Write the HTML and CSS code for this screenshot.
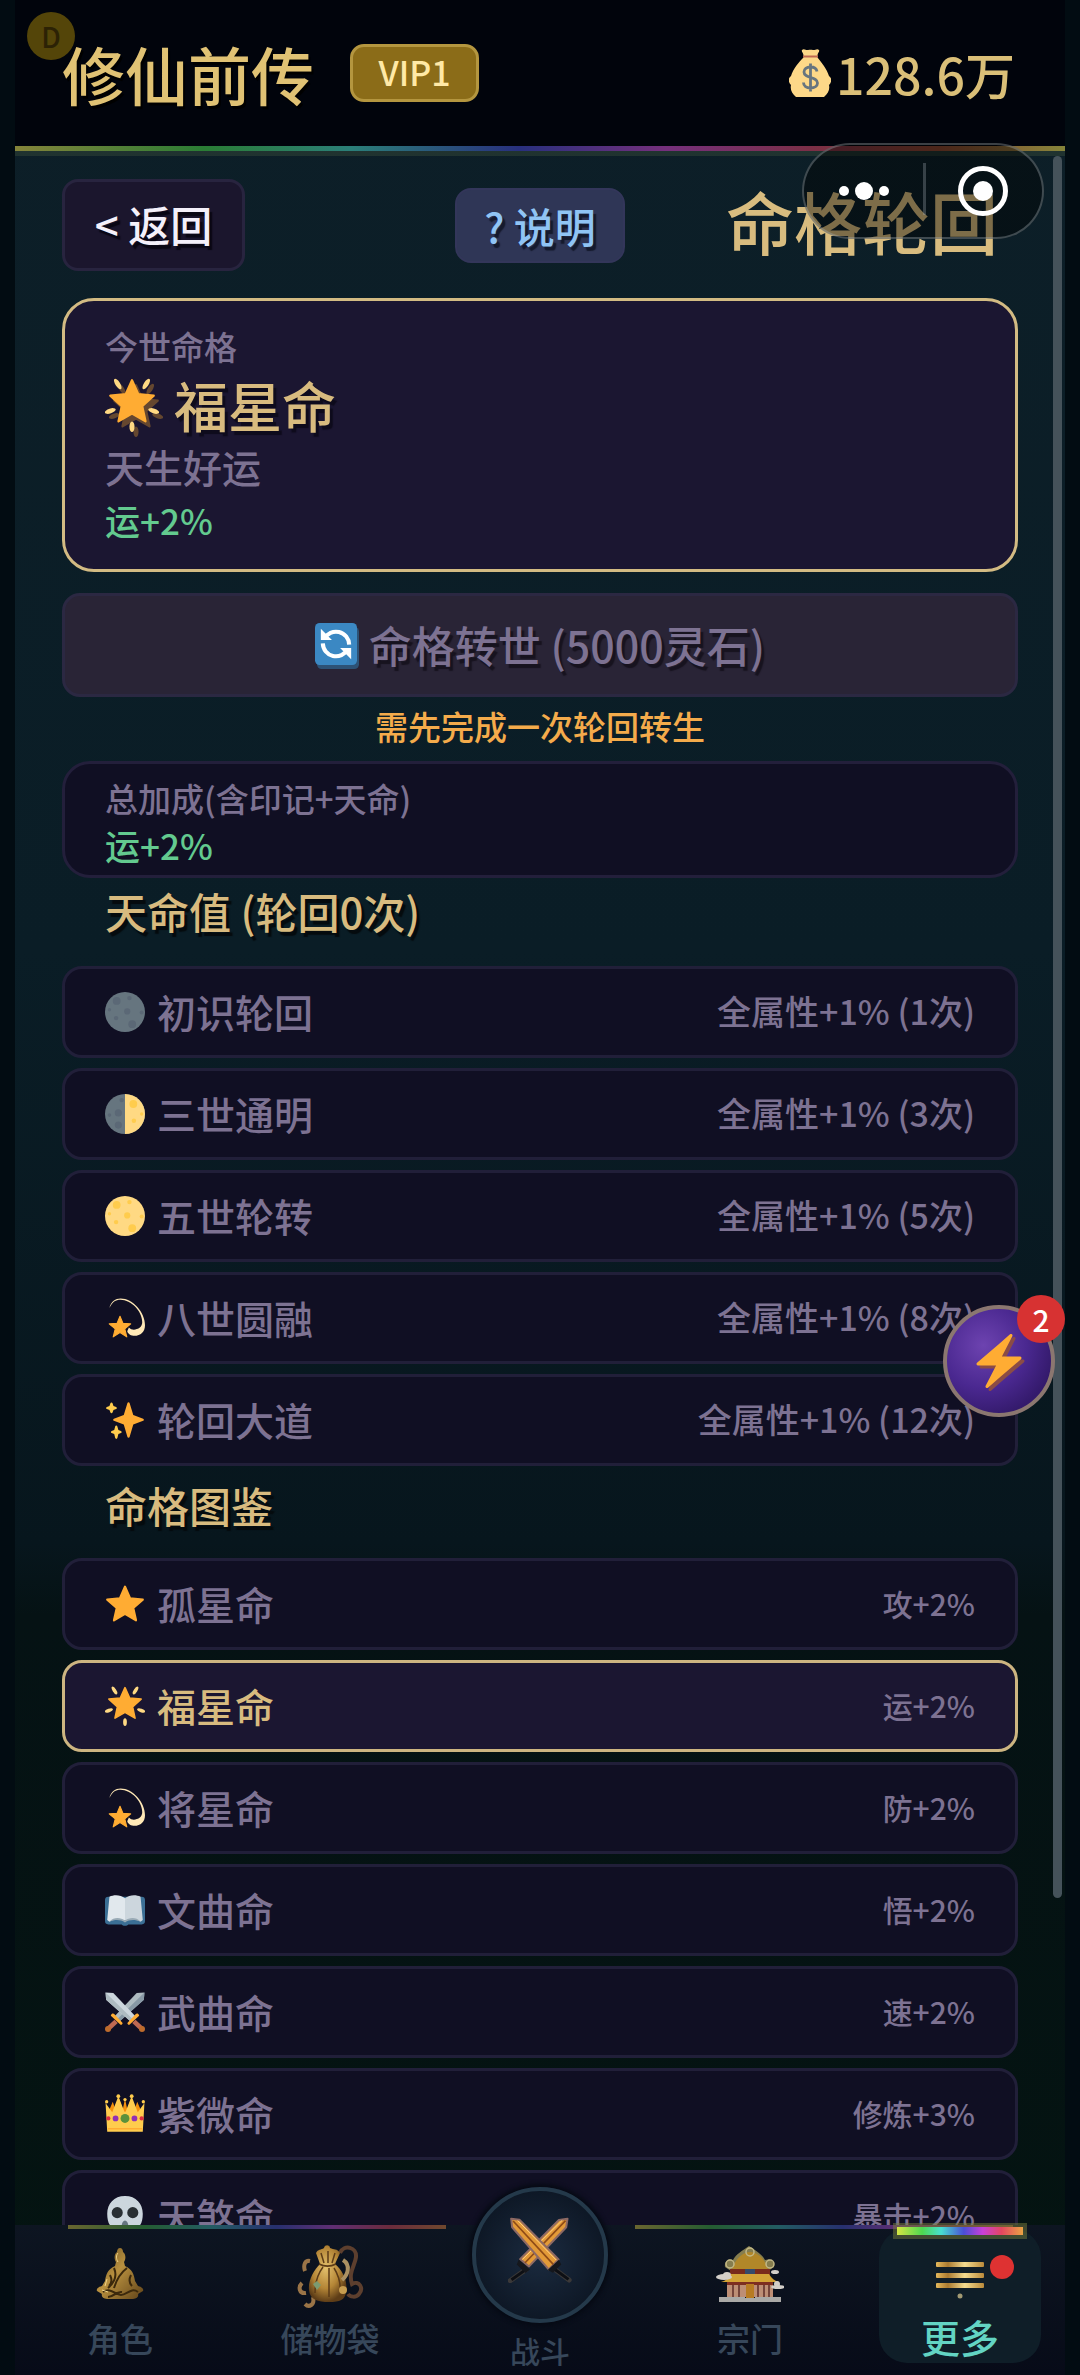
FILE: index.html
```html
<!DOCTYPE html>
<html lang="zh-CN">
<head>
  <meta charset="UTF-8" />
  <meta name="viewport" content="width=device-width, initial-scale=1.0"/>
  <title>修仙前传</title>
  <link rel="stylesheet" href="styles.css">
</head>
<body>

<!-- 图标 -->
<svg class="sprite" aria-hidden="true">
  <defs>
    <linearGradient id="gold" x1="0" y1="0" x2="1" y2="1">
      <stop offset="0" stop-color="#6b5222"/><stop offset=".45" stop-color="#b8903f"/><stop offset="1" stop-color="#5f4218"/>
    </linearGradient>
    <linearGradient id="bar" x1="0" y1="0" x2="1" y2="0">
      <stop offset="0" stop-color="#e5b95c"/><stop offset=".25" stop-color="#a97a30"/><stop offset=".6" stop-color="#f3dc90"/><stop offset="1" stop-color="#b98a3a"/>
    </linearGradient>
    <radialGradient id="sack" cx=".45" cy=".4" r=".6">
      <stop offset="0" stop-color="#e3c06c"/><stop offset=".6" stop-color="#b48536"/><stop offset="1" stop-color="#5e3d17"/>
    </radialGradient>
    <clipPath id="half"><path d="M18 0h18v36H18z"/></clipPath>
  </defs>
  <symbol id="star" viewBox="0 0 36 36">
    <path d="M18 2.500l4.600 10.400 11.400 1.100-8.600 7.500 2.500 11.200L18 26.900l-9.900 5.800 2.500-11.200L2 14l11.400-1.100z" fill="#ffac33" stroke="#ffac33" stroke-width="2" stroke-linejoin="round"/>
  </symbol>
  <symbol id="glow" viewBox="0 0 36 36">
    <g fill="#ffd983">
      <ellipse cx="8.500" cy="4" rx="1.600" ry="4" transform="rotate(-32 8.500 4)"/>
      <ellipse cx="27.500" cy="4" rx="1.600" ry="4" transform="rotate(32 27.500 4)"/>
      <ellipse cx="3.500" cy="22" rx="1.600" ry="3.800" transform="rotate(72 3.500 22)"/>
      <ellipse cx="32.500" cy="22" rx="1.600" ry="3.800" transform="rotate(-72 32.500 22)"/>
      <ellipse cx="18" cy="32.500" rx="1.700" ry="3.500"/>
    </g>
    <path d="M18 1.500l4.200 9.300 10.300 1-7.700 6.900 2.200 10.200L18 23.700l-9 5.200 2.200-10.200-7.700-6.900 10.300-1z" fill="#ffac33" stroke="#ffac33" stroke-width="1.500" stroke-linejoin="round"/>
  </symbol>
  <symbol id="dizzy" viewBox="0 0 36 36">
    <path d="M4 9C5.500 3 9.500.500 14 .500 25 .500 36 13 36 24.500c0 6-4 9.500-9.500 9.500-3 0-5.500-1-6.500-4l1.500-3.500c2 2 4.500 2.500 7 1.500 3-1 5-3 5-6.500C33.500 12 23.500 1.600 14 1.600 9.500 1.600 6.500 3.600 4 9z" fill="#ffe8b6"/>
    <path d="M13.500 16.500l2.600 6.300 7 .500-5.300 4.500 1.800 7.200-6.100-3.900-6.100 3.900 1.800-7.200-5.400-4.500 7.100-.500z" fill="#ffac33" stroke="#ffac33" stroke-linejoin="round"/>
  </symbol>
  <symbol id="sparkles" viewBox="0 0 36 36">
    <path fill="#ffac33" d="M34.347 16.893l-8.899-3.294-3.323-10.891c-.128-.42-.517-.708-.956-.708-.439 0-.828.288-.956.708l-3.322 10.891-8.900 3.294c-.393.146-.653.519-.653.938 0 .418.260.793.653.938l8.895 3.293 3.324 11.223c.126.424.516.715.959.715.442 0 .833-.291.959-.716l3.324-11.223 8.896-3.293c.391-.144.652-.518.652-.937 0-.418-.261-.792-.653-.938z"/>
    <path fill="#ffcc4d" d="M14.347 27.894l-2.314-.856-.9-3.300c-.118-.436-.513-.738-.964-.738-.451 0-.846.302-.965.737l-.9 3.300-2.313.856c-.393.146-.653.520-.653.938 0 .418.260.792.653.938l2.301.853.907 3.622c.112.444.511.756.970.756.459 0 .858-.312.970-.757l.907-3.622 2.301-.853c.393-.144.653-.519.653-.937 0-.418-.260-.793-.653-.937zM10.009 6.231l-2.364-.875-.876-2.365c-.145-.393-.519-.653-.938-.653-.418 0-.792.260-.938.653l-.875 2.365-2.365.875c-.393.146-.653.520-.653.938 0 .418.260.793.653.938l2.365.875.875 2.365c.146.393.520.653.938.653.418 0 .792-.260.938-.653l.875-2.365 2.365-.875c.393-.146.653-.520.653-.938 0-.418-.260-.792-.653-.938z"/>
  </symbol>
  <symbol id="craters" viewBox="0 0 36 36">
    <circle cx="10.500" cy="8" r="3.500"/><circle cx="20" cy="17.500" r="2.800"/><circle cx="24.500" cy="29" r="3.500"/><circle cx="22" cy="5.500" r="2"/><circle cx="10" cy="23.500" r="2"/><circle cx="33" cy="18.500" r="1.800"/><circle cx="4" cy="16" r="1.500"/>
  </symbol>
  <symbol id="newmoon" viewBox="0 0 36 36">
    <circle cx="18" cy="18" r="18" fill="#66757f"/><use href="#craters" fill="#5b6876"/>
  </symbol>
  <symbol id="fullmoon" viewBox="0 0 36 36">
    <circle cx="18" cy="18" r="18" fill="#ffd983"/><use href="#craters" fill="#ffcc4d"/>
  </symbol>
  <symbol id="halfmoon" viewBox="0 0 36 36">
    <circle cx="18" cy="18" r="18" fill="#66757f"/>
    <g fill="#5b6876"><circle cx="15" cy="5.500" r="2"/><circle cx="12" cy="17" r="3.200"/><circle cx="12" cy="28" r="3.200"/><circle cx="4" cy="19" r="1.600"/></g>
    <circle cx="18" cy="18" r="18" fill="#ffd983" clip-path="url(#half)"/>
    <g fill="#ffcc4d"><circle cx="25.500" cy="9" r="3.500"/><circle cx="26" cy="24" r="2"/><circle cx="33" cy="18" r="1.500"/></g>
  </symbol>
  <symbol id="book" viewBox="0 0 36 36">
    <path d="M3 6h30a3 3 0 0 1 3 3v19a3 3 0 0 1-3 3H21c-1 1.500-5 1.500-6 0H3a3 3 0 0 1-3-3V9a3 3 0 0 1 3-3z" fill="#3b6f95"/>
    <path d="M2 27L4 6c4-2 10-2 14 1.500v20c-5-2-10-2-14 1z" fill="#e1e8ed"/>
    <path d="M34 27L32 6c-4-2-10-2-14 1.500v20c5-2 10-2 14 1z" fill="#ccd6dd"/>
    <path d="M4 28.500c4-4.500 10-4 14-1 4-3 10-3.500 14 1-5-2-10-2-14 .800-4-2.800-9-2.800-14-.8z" fill="#99aab5"/>
  </symbol>
  <symbol id="swords" viewBox="0 0 36 36">
    <path d="M35.500.500l-7 .500L8 22.500l4.500 4.500L35 7z" fill="#aebbc1"/>
    <path d="M35.500.500L10.500 25l2 2L35 7z" fill="#8899a6"/>
    <path d="M6 20c0-1 2-1 2.500 0l7 7.500c1 1-.5 2.500-1.500 2l-8-7.500c-1-.500-1-1.500 0-2z" fill="#ffac33"/>
    <path d="M8.500 25l3 3-7 6.500-3-3z" fill="#bf6952"/><circle cx="2.700" cy="33.300" r="2.700" fill="#bd6b2c"/>
    <path d="M.500.500l7 .500L28 22.500 23.500 27 1 7z" fill="#ccd6dd"/>
    <path d="M.500.500L25.500 25l-2 2L1 7z" fill="#aebbc1"/>
    <path d="M30 20c0-1-2-1-2.500 0l-7 7.500c-1 1 .5 2.500 1.500 2l8-7.500c1-.500 1-1.500 0-2z" fill="#ffac33"/>
    <path d="M27.500 25l-3 3 7 6.500 3-3z" fill="#bf6952"/><circle cx="33.300" cy="33.300" r="2.700" fill="#bd6b2c"/>
  </symbol>
  <symbol id="crown" viewBox="0 0 36 36">
    <path d="M4 14l3-7 3 9 2-14 4 12 2-10 2 10 4-12 2 14 3-9 3 7-1 19H5z" fill="#f4900c"/>
    <path d="M2 34L.500 8l6 8.500L12 2l5.500 14h1L24 2l5.500 14.500 6-8.500L34 34z" fill="#ffcc4d"/>
    <g fill="#ffcc4d"><circle cx="1.500" cy="7" r="1.500"/><circle cx="12" cy="2" r="1.700"/><circle cx="24" cy="2" r="1.700"/><circle cx="34.500" cy="7" r="1.500"/><circle cx="18" cy="5" r="1.500"/></g>
    <path d="M2.500 30.500h31v1.500h-31z" fill="#ffac33"/>
    <circle cx="18" cy="22" r="4" fill="#5c913b"/><circle cx="9.500" cy="22" r="2.600" fill="#9232b4"/><circle cx="26.500" cy="22" r="2.600" fill="#9232b4"/><circle cx="3" cy="22" r="1.900" fill="#dd2e44"/><circle cx="33" cy="22" r="1.900" fill="#dd2e44"/>
  </symbol>
  <symbol id="skull" viewBox="0 0 36 36">
    <path d="M18 0C8 0 2 7 2 16c0 7 2 12 6 12v5a3 3 0 0 0 3 3h14a3 3 0 0 0 3-3v-5c4 0 6-5 6-12C34 7 28 0 18 0z" fill="#ccd6dd"/>
    <circle cx="11" cy="15" r="5" fill="#292f33"/><circle cx="25" cy="15" r="5" fill="#292f33"/><path d="M18 22c-2 0-3 3-3 5h6c0-2-1-5-3-5z" fill="#66757f"/>
  </symbol>
  <symbol id="refresh" viewBox="0 0 36 36">
    <rect width="36" height="36" rx="4" fill="#3b88c3"/>
    <path d="M8 13.500A11.300 11.300 0 0 1 29.300 18.500M28 22.500A11.300 11.300 0 0 1 6.700 17.500" fill="none" stroke="#fff" stroke-width="3.500"/>
    <path d="M5 5v9.500h9.500zM31 31v-9.500h-9.500z" fill="#fff"/>
  </symbol>
  <symbol id="bolt" viewBox="0 0 36 36">
    <path fill="#ffac33" d="M32.938 15.651C32.792 15.260 32.418 15 32 15H19.925L26.890 1.458c.219-.426.106-.947-.271-1.243C26.437.071 26.218 0 26 0c-.233 0-.466.082-.653.243L18 6.588 3.347 19.243c-.316.273-.430.714-.284 1.105S3.582 21 4 21h12.075L9.110 34.542c-.219.426-.106.947.271 1.243.182.144.401.215.619.215.233 0 .466-.082.653-.243L18 29.412l14.653-12.655c.317-.273.430-.714.285-1.106z"/>
  </symbol>
  <symbol id="moneybag" viewBox="0 0 42 48">
    <path d="M13 1c2-2 4 .500 6 0s3-.500 5 0 4-2 6 0c1 1.500-1.500 3-1.500 5.500v2C32 13 38 20 40 27c3 2 3 6 0 9 1 5-1 8-5 12H7c-4-4-6-7-5-12-3-3-3-7 0-9 2-7 8-14 12.500-18.500v-2C14.500 4 12 2.500 13 1z" fill="#fdd888"/>
    <path d="M14 6.500h15v2H14z" fill="#bf6952"/>
    <path d="M28 22.500c-.5-3-3-4.500-6.500-4.500-4 0-6.500 2-6.500 5 0 7 13.500 4 13.500 11 0 3-3 5-7 5s-7-2-7-5.500M21.500 14.500v28" fill="none" stroke="#67757f" stroke-width="2.800"/>
  </symbol>
</svg>

<div class="app">
  <header class="header">
    <span class="debug">D</span>
    <h1 class="game-name">修仙前传</h1>
    <span class="vip">VIP1</span>
    <span class="money"><svg class="money-icon" aria-hidden="true"><use href="#moneybag"/></svg>128.6万</span>
  </header>
  <div class="rainbow"></div>

  <div class="capsule">
    <button class="capsule-button" aria-label="菜单"><svg width="50" height="50" viewBox="0 0 50 50" fill="#fff"><circle cx="5" cy="25" r="5"/><circle cx="25" cy="25" r="9"/><circle cx="45" cy="25" r="5"/></svg></button>
    <button class="capsule-button" aria-label="关闭"><svg width="50" height="50" viewBox="0 0 50 50"><circle cx="25" cy="25" r="22.500" fill="none" stroke="#fff" stroke-width="5"/><circle cx="25" cy="25" r="10" fill="#fff"/></svg></button>
  </div>

  <main class="main">
    <div class="topbar">
      <button class="back">&lt; 返回</button>
      <button class="help">? 说明</button>
      <h2 class="page-title">命格轮回</h2>
    </div>

    <section class="card current">
      <p class="label">今世命格</p>
      <p class="fate-name"><svg class="icon" aria-hidden="true"><use href="#glow"/></svg>福星命</p>
      <p class="desc">天生好运</p>
      <p class="bonus">运+2%</p>
    </section>

    <button class="reroll"><svg class="icon" aria-hidden="true"><use href="#refresh"/></svg>命格转世 (5000灵石)</button>
    <p class="warning">需先完成一次轮回转生</p>

    <section class="card total">
      <p class="label">总加成(含印记+天命)</p>
      <p class="bonus">运+2%</p>
    </section>

    <h3 class="section-title">天命值 (轮回0次)</h3>
    <ul class="list">
      <li class="row"><svg class="icon" aria-hidden="true"><use href="#newmoon"/></svg><span>初识轮回</span><span class="value">全属性+1% (1次)</span></li>
      <li class="row"><svg class="icon" aria-hidden="true"><use href="#halfmoon"/></svg><span>三世通明</span><span class="value">全属性+1% (3次)</span></li>
      <li class="row"><svg class="icon" aria-hidden="true"><use href="#fullmoon"/></svg><span>五世轮转</span><span class="value">全属性+1% (5次)</span></li>
      <li class="row"><svg class="icon" aria-hidden="true"><use href="#dizzy"/></svg><span>八世圆融</span><span class="value">全属性+1% (8次)</span></li>
      <li class="row"><svg class="icon" aria-hidden="true"><use href="#sparkles"/></svg><span>轮回大道</span><span class="value">全属性+1% (12次)</span></li>
    </ul>

    <h3 class="section-title">命格图鉴</h3>
    <ul class="list fates">
      <li class="row"><svg class="icon" aria-hidden="true"><use href="#star"/></svg><span>孤星命</span><span class="value">攻+2%</span></li>
      <li class="row active"><svg class="icon" aria-hidden="true"><use href="#glow"/></svg><span>福星命</span><span class="value">运+2%</span></li>
      <li class="row"><svg class="icon" aria-hidden="true"><use href="#dizzy"/></svg><span>将星命</span><span class="value">防+2%</span></li>
      <li class="row"><svg class="icon" aria-hidden="true"><use href="#book"/></svg><span>文曲命</span><span class="value">悟+2%</span></li>
      <li class="row"><svg class="icon" aria-hidden="true"><use href="#swords"/></svg><span>武曲命</span><span class="value">速+2%</span></li>
      <li class="row"><svg class="icon" aria-hidden="true"><use href="#crown"/></svg><span>紫微命</span><span class="value">修炼+3%</span></li>
      <li class="row"><svg class="icon" aria-hidden="true"><use href="#skull"/></svg><span>天煞命</span><span class="value">暴击+2%</span></li>
    </ul>
    <div class="scrollbar"></div>
  </main>

  <button class="quick" aria-label="快捷">
    <svg class="icon" aria-hidden="true"><use href="#bolt"/></svg>
    <span class="badge">2</span>
  </button>

  <nav class="nav">
    <a class="nav-item" href="#role">
      <svg class="nav-icon" viewBox="0 0 68 68" aria-hidden="true">
        <path d="M34 7c-2 0-3 2-3 4-3 2-3 7-1 10l-1 4c-7 3-9 8-10 15l-3 5c-4 1-6 3-5 5l5 3c-1 2 1 5 5 5h26c4 0 6-3 5-5l5-3c1-2-1-4-5-5l-3-5c-1-7-3-12-10-15l-1-4c2-3 2-8-1-10 0-2-1-4-3-4z" fill="url(#gold)"/>
        <path d="M28 27c3 7 1 14-6 20M41 27c-4 3-10 10-13 20M24 34c2 4 2 8-1 11M45 34c-2 4-2 8 1 11M17 51c8-5 12 3 18 3s10-8 17-3M22 56c6 0 8-6 14-5" fill="none" stroke="#3c290c" stroke-width="2"/>
        <path d="M32 12c-2 2-2 6 0 9M21 38l-2 7M16 49l6 2" fill="none" stroke="#f1d58a" stroke-width="1"/>
      </svg>
      <span>角色</span>
    </a>
    <a class="nav-item" href="#bag">
      <svg class="nav-icon" viewBox="0 0 68 68" aria-hidden="true">
        <path d="M44 12c4-9 17-6 16 4-1 9-8 15-4 27 7-4 12 4 7 10-3 4-9 3-11 0" fill="none" stroke="#5d3f2e" stroke-width="4"/>
        <path d="M9 30c-2-6 0-11 5-10M6 42c-4 4-3 11 4 10M17 56c2 8-4 11-8 7" fill="none" stroke="#9a7447" stroke-width="4"/>
        <path d="M20 12c2-4 5-3 8-5 1-4 6-3 6 0 4 2 7 0 10 5l-5 11c8 7 13 17 11 28-1 8-6 10-17 10s-19-2-20-12c-1-10 5-20 11-26z" fill="url(#sack)"/>
        <path d="M23 23c6 3 11 3 17 0M25 12l3 10M32 10v12M39 12l-3 10M27 26c-6 8-8 17-8 26M33 27v29M38 27c5 8 7 16 6 25" fill="none" stroke="#5c3b17" stroke-width="1.500"/>
        <path d="M17 43l4-3 4 4-4 5z" fill="#7b9b71"/><path d="M47 19c8 5 5 15-1 20" fill="none" stroke="#ab9163" stroke-width="4"/><circle cx="47" cy="49" r="4" fill="#c79d4f"/>
      </svg>
      <span>储物袋</span>
    </a>
    <a class="nav-item battle" href="#battle">
      <span class="orb">
        <svg viewBox="150 100 190 205" aria-hidden="true">
          <path d="M203 264l-48 34" stroke="#3a3838" stroke-width="15" stroke-linecap="round"/><path d="M203 264l-44 31" stroke="#0d0f14" stroke-width="9"/>
          <path d="M328 111l-4 26-112 118-27-22L302 115z" fill="#e39a38" stroke="#8d6963" stroke-width="6" stroke-linejoin="round"/>
          <path d="M322 117L200 244" stroke="#8e4b17" stroke-width="5"/><path d="M312 116L192 234" stroke="#ffd082" stroke-width="3"/>
          <path d="M181 234l34 30-14 11-26-26z" fill="#15171c"/>
          <path d="M287 262l46 34" stroke="#3a3838" stroke-width="15" stroke-linecap="round"/><path d="M287 262l44 32" stroke="#0d0f14" stroke-width="9"/>
          <path d="M158 111l25 3 118 120-30 30L161 137z" fill="#e39a38" stroke="#8d6963" stroke-width="6" stroke-linejoin="round"/>
          <path d="M164 118l121 131" stroke="#8e4b17" stroke-width="5"/><path d="M178 117l116 119" stroke="#ffd082" stroke-width="3"/>
          <path d="M302 235l-34 31 16 8 25-25z" fill="#15171c"/>
        </svg>
      </span>
      <span>战斗</span>
    </a>
    <a class="nav-item" href="#sect">
      <svg class="nav-icon" viewBox="0 0 68 68" aria-hidden="true">
        <path d="M9 26c-1-6 4-9 8-7 3-6 9-9 16-14 7 5 13 8 16 14 5-2 10 1 9 7l-6 4H15z" fill="#857d4e"/>
        <path d="M34 11c7 0 15 7 18 17H16c3-10 11-17 18-17z" fill="#b18728"/>
        <g fill="none" stroke="#c2b887" stroke-width="1.500"><circle cx="14" cy="23" r="4"/><circle cx="54" cy="23" r="4"/><circle cx="34" cy="11" r="4"/></g>
        <path d="M14 28h40v6H14z" fill="#792b1c"/><path d="M29 28h10v5H29z" fill="#344a6b"/>
        <path d="M15 33h38c2 4 6 7 10 8H5c4-1 8-4 10-8z" fill="#d3a336"/>
        <path d="M11 41h46v15H11z" fill="#bd8e75"/><path d="M11 41h46v3H11z" fill="#7d2e20"/>
        <path d="M17 44v12M23 44v12M42 44v12M48 44v12M53 44v12" stroke="#74443a" stroke-width="2"/><path d="M30 43h8v15h-8z" fill="#b77b22"/>
        <path d="M3 56h26v5H3zM39 56h26v5H39zM29 57h10v4H29z" fill="#aaa9a6"/>
        <g fill="#d3cfc9"><ellipse cx="8" cy="36" rx="8" ry="3"/><ellipse cx="11" cy="34" rx="4" ry="3"/><ellipse cx="62" cy="46" rx="7" ry="2"/><ellipse cx="61" cy="43" rx="3" ry="3"/><ellipse cx="59" cy="31" rx="4" ry="2"/></g>
      </svg>
      <span>宗门</span>
    </a>
    <a class="nav-item selected" href="#more">
      <svg class="nav-icon" viewBox="0 0 68 68" aria-hidden="true">
        <g fill="url(#bar)"><rect x="10" y="21" width="48" height="5" rx="1"/><rect x="10" y="32" width="48" height="5" rx="1"/><rect x="10" y="42" width="48" height="5" rx="1"/></g>
        <circle cx="34" cy="55" r="2.500" fill="#a29a73"/>
      </svg>
      <i class="dot"></i>
      <span>更多</span>
    </a>
  </nav>
</div>

</body>
</html>
```

FILE: styles.css
```css
* { box-sizing: border-box; }
body { margin: 0; background: #020c12; color: #7d7292; font-family: "Noto Sans CJK SC", sans-serif; font-weight: 500; font-size: 33px; }
h1, h2, h3, p, ul { margin: 0; padding: 0; font-weight: 500; }
button { font: inherit; cursor: pointer; }
svg { display: block; }
.sprite { position: absolute; width: 0; height: 0; }

.app { position: relative; display: flex; flex-direction: column; height: 100vh; margin: 0 15px; background: linear-gradient(#0d1f28, #0a1d26 40%, #07161d 65%, #051214 68%, #041411); }

/* 顶部 */
.header { display: flex; align-items: center; height: 146px; padding: 0 50px 0 47px; background: #01040c; color: #e0c274; }
.game-name { font-size: 63px; line-height: 80px; text-shadow: 2px 3px 0 #000; }
.vip { margin-left: 36px; width: 129px; height: 58px; border: 3px solid #b4963f; border-radius: 14px; background: #8b6c18; color: #ffe9a6; font-size: 34px; line-height: 50px; text-align: center; }
.money { display: flex; align-items: center; gap: 5px; margin-left: auto; color: #dabf78; font-size: 50px; line-height: 60px; }
.money-icon { width: 42px; height: 48px; }
.debug { position: absolute; left: 12px; top: 12px; width: 48px; height: 48px; border-radius: 50%; background: #544509; color: #2c2205; font-size: 28px; line-height: 48px; text-align: center; }
.rainbow { height: 5px; background: linear-gradient(90deg, #85843a, #2a7d35 18%, #2b7f79 32%, #28307e 48%, #75307c 62%, #7b2f46 76%, #84432e 88%, #85843a); box-shadow: 0 5px 0 rgba(90, 110, 70, 0.25); }

.capsule { position: absolute; z-index: 3; right: 21px; top: 143px; display: flex; width: 242px; height: 96px; border: 2px solid rgba(170, 180, 185, 0.35); border-radius: 48px; background: rgba(0, 0, 0, 0.42); }
.capsule-button { display: flex; align-items: center; justify-content: center; flex: 1; padding: 0; border: 0; background: none; }
.capsule-button + .capsule-button::before { content: ""; position: absolute; left: 50%; top: 18px; width: 3px; height: 52px; background: rgba(170, 180, 185, 0.3); }

/* 主体 */
.main { position: relative; flex: 1; min-height: 0; overflow: hidden; padding: 28px 47px 0; }
.topbar { display: grid; grid-template-columns: 1fr auto 1fr; align-items: center; height: 92px; margin-bottom: 27px; }
.back { justify-self: start; width: 183px; height: 92px; padding: 0 0 4px; border: 3px solid #28243f; border-radius: 16px; background: #1b162d; color: #f4f0fa; font-size: 42px; text-shadow: 3px 4px 1px #0a0714; }
.help { width: 170px; height: 75px; padding: 0; border: 2px solid #33365a; border-radius: 16px; background: #2f3656; color: #90c4f4; font-size: 41px; line-height: 60px; text-shadow: 3px 4px 1px #151a2d; }
.page-title { justify-self: end; padding-right: 20px; color: #d8bc7f; font-size: 68px; line-height: 84px; padding-bottom: 8px; }

.card { padding: 0 40px; border: 3px solid #231f3b; background: #100f23; }
.label { line-height: 44px; }
.bonus { color: #63ca8f; font-size: 35px; }
.current { padding-top: 23px; padding-bottom: 19px; border-color: #d3bb83; border-radius: 32px; background: #1b1631; }
.fate-name { display: flex; align-items: center; gap: 15px; color: #d8bb7f; font-size: 54px; line-height: 74px; text-shadow: 3px 4px 1px #0e0b1c; }
.fate-name .icon { width: 54px; height: 54px; filter: drop-shadow(4px 5px 0 #65472f); }
.current .desc { font-size: 39px; line-height: 48px; }
.current .bonus { line-height: 60px; }

.reroll { display: flex; align-items: center; justify-content: center; gap: 12px; width: 100%; height: 104px; margin-top: 21px; padding-bottom: 4px; border: 3px solid #2b2842; border-radius: 18px; background: #292436; color: #7d7292; font-size: 43px; text-shadow: 3px 4px 1px #17131f; }
.reroll .icon { width: 42px; height: 42px; filter: drop-shadow(2px 4px 0 #2d5276); }
.warning { padding-bottom: 6px; line-height: 58px; color: #f4ab4b; text-align: center; }
.total { padding-top: 12px; padding-bottom: 5px; border-radius: 28px; }
.total .bonus { line-height: 50px; }

.section-title { height: 88px; padding-left: 43px; color: #d8bb7f; font-size: 42px; line-height: 66px; text-shadow: 3px 4px 1px #050b0e; }
.list { display: flex; flex-direction: column; gap: 10px; list-style: none; }
.list + .section-title { height: 92px; line-height: 78px; }
.row { display: flex; align-items: center; flex: none; height: 92px; padding: 0 40px; border: 3px solid #211f39; border-radius: 20px; background: #100f23; font-size: 39px; line-height: 60px; }
.row .icon { width: 40px; height: 40px; margin-right: 12px; }
.row span { padding-bottom: 2px; }
.value { margin-left: auto; font-size: 34px; }
.fates .value { font-size: 30px; }
.active { border-color: #cdb581; background: #1b1631; color: #d8bb7f; }
.active .value { color: #7d7292; }
.scrollbar { position: absolute; right: 3px; top: 5px; width: 9px; height: 84%; border-radius: 5px; background: #45525a; }

.quick { position: absolute; z-index: 3; right: 10px; top: 1305px; display: flex; align-items: center; justify-content: center; width: 112px; height: 112px; padding: 0; border: 4px solid #8b7770; border-radius: 50%; background: radial-gradient(circle at 35% 35%, #6d43b0, #4a2890 45%, #341a6c 75%); }
.quick .icon { width: 54px; height: 54px; filter: drop-shadow(3px 3px 0 #8b4c45); }
.badge { position: absolute; right: -14px; top: -14px; width: 48px; height: 48px; border-radius: 50%; background: #d73232; color: #fff; font-size: 30px; line-height: 48px; text-align: center; }

/* 底部导航 */
.nav { position: relative; display: grid; grid-template-columns: repeat(5, 1fr); height: 150px; background: linear-gradient(#0d1521, #070b18); }
.nav::before, .nav::after { content: ""; position: absolute; top: 0; left: 5%; width: 36%; height: 4px; background: linear-gradient(90deg, #6a6530, #255c31 20%, #235c63 38%, #27306f 55%, #602e73 70%, #6b2b3d 85%, #70482e); }
.nav::after { left: 59%; }
.nav-item { position: relative; display: flex; flex-direction: column; align-items: center; gap: 7px; padding-top: 16px; color: #37475a; font-size: 33px; line-height: 44px; text-decoration: none; }
.nav-icon { width: 68px; height: 68px; }
.battle { z-index: 1; gap: 5px; margin-top: -38px; padding-top: 0; font-size: 30px; }
.battle .orb { display: flex; align-items: center; justify-content: center; flex: none; width: 136px; height: 136px; padding-bottom: 12px; border: 4px solid #24394a; border-radius: 50%; background: radial-gradient(#1b2b40, #0e1826 70%); box-shadow: 0 0 4px 3px #060a14; }
.orb svg { width: 64px; height: 68px; }
.selected { z-index: 1; gap: 5px; margin: 4px 24px 12px; padding-top: 12px; border-radius: 28px; background: #0f1e28; color: #63d4c3; font-size: 39px; }
.selected::before { content: ""; position: absolute; top: -2px; left: 18px; right: 18px; height: 8px; background: linear-gradient(90deg, #d5e643, #4ed850 20%, #48dfcf 35%, #4a4fd5 53%, #c840d7 68%, #e44760 83%, #eba444); box-shadow: 0 0 0 4px rgba(120, 125, 60, 0.5); }
.dot { position: absolute; right: 27px; top: 26px; width: 24px; height: 24px; border-radius: 50%; background: #de3232; }
```
